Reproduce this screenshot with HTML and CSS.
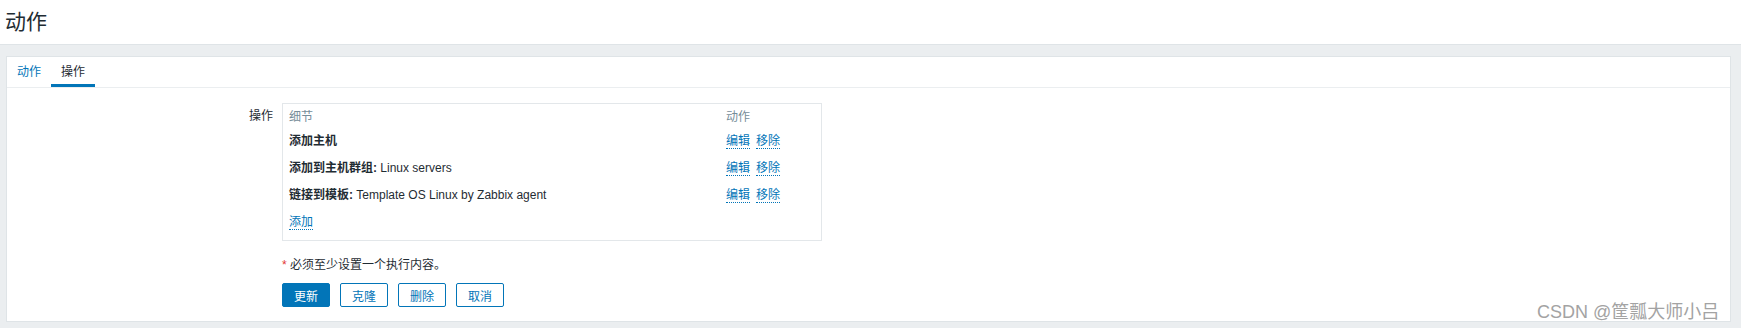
FILE: index.html
```html
<!DOCTYPE html>
<html lang="zh-CN">
<head>
    <meta charset="UTF-8">
    <title>动作</title>
    <link rel="stylesheet" href="styles.css">
</head>
<body>
    <header class="page-header">
        <h1>动作</h1>
    </header>

    <main class="panel">
        <ul class="tabs">
            <li><a href="#">动作</a></li>
            <li class="active"><a href="#">操作</a></li>
        </ul>

        <div class="form">
            <div class="form-row">
                <label class="form-label">操作</label>
                <div class="form-field">
                    <div class="op-box">
                        <table class="op-table">
                            <thead>
                                <tr>
                                    <th>细节</th>
                                    <th class="col-action">动作</th>
                                </tr>
                            </thead>
                            <tbody>
                                <tr>
                                    <td><b>添加主机</b></td>
                                    <td class="col-action"><a class="link" href="#">编辑</a><a class="link" href="#">移除</a></td>
                                </tr>
                                <tr>
                                    <td><b>添加到主机群组:</b> Linux servers</td>
                                    <td class="col-action"><a class="link" href="#">编辑</a><a class="link" href="#">移除</a></td>
                                </tr>
                                <tr>
                                    <td><b>链接到模板:</b> Template OS Linux by Zabbix agent</td>
                                    <td class="col-action"><a class="link" href="#">编辑</a><a class="link" href="#">移除</a></td>
                                </tr>
                                <tr>
                                    <td colspan="2"><a class="link" href="#">添加</a></td>
                                </tr>
                            </tbody>
                        </table>
                    </div>

                    <p class="note"><span class="star">*</span> 必须至少设置一个执行内容。</p>

                    <div class="buttons">
                        <button class="btn btn-primary">更新</button>
                        <button class="btn">克隆</button>
                        <button class="btn">删除</button>
                        <button class="btn">取消</button>
                    </div>
                </div>
            </div>
        </div>
    </main>

    <div class="watermark">CSDN @筐瓢大师小吕</div>
</body>
</html>
```

FILE: styles.css
```css
body {
    margin: 0;
    background: #ebeef0;
    font-family: "Liberation Sans", "Noto Sans CJK SC", sans-serif;
    font-size: 12px;
    color: #1f2c33;
}

.page-header {
    height: 44px;
    background: #fff;
    border-bottom: 1px solid #dfe4e7;
}

.page-header h1 {
    margin: 0;
    padding-left: 5px;
    font-size: 21px;
    font-weight: normal;
    line-height: 44px;
}

.panel {
    margin: 11px 10px 0 6px;
    height: 264px;
    background: #fff;
    border: 1px solid #dfe4e7;
}

.tabs {
    display: flex;
    margin: 0;
    padding: 0;
    list-style: none;
    height: 30px;
    border-bottom: 1px solid #ebeef0;
}

.tabs li {
    width: 44px;
    text-align: center;
    line-height: 30px;
}

.tabs a {
    display: block;
    color: #0275b8;
    text-decoration: none;
}

.tabs li.active {
    box-shadow: inset 0 -3px 0 #0275b8;
}

.tabs li.active a {
    color: #1f2c33;
}

.form {
    padding-top: 15px;
}

.form-row {
    display: grid;
    grid-template-columns: 266px 540px;
    column-gap: 9px;
}

.form-label {
    text-align: right;
    padding-top: 6px;
    line-height: 14px;
}

.op-box {
    border: 1px solid #e3e7ea;
    padding-bottom: 6px;
}

.op-table {
    width: 100%;
    border-collapse: collapse;
}

.op-table th {
    height: 22px;
    padding: 0 6px;
    text-align: left;
    font-weight: normal;
    color: #768d99;
}

.op-table td {
    height: 27px;
    padding: 0 6px;
}

.op-table .col-action {
    width: 89px;
}

.link {
    color: #0275b8;
    text-decoration: none;
    border-bottom: 1px dotted #0275b8;
    margin-right: 6px;
}

.note {
    margin: 17px 0 0 0;
    line-height: 14px;
}

.star {
    color: #e33734;
}

.buttons {
    display: flex;
    gap: 10px;
    margin-top: 11px;
}

.btn {
    height: 24px;
    width: 48px;
    padding: 0;
    font-family: inherit;
    font-size: 12px;
    color: #0275b8;
    background: #fff;
    border: 1px solid #0275b8;
    border-radius: 2px;
    cursor: pointer;
}

.btn-primary {
    color: #fff;
    background: #0275b8;
}

.watermark {
    position: absolute;
    left: 1537px;
    top: 297px;
    font-size: 18px;
    color: #a3a3a3;
}
```
